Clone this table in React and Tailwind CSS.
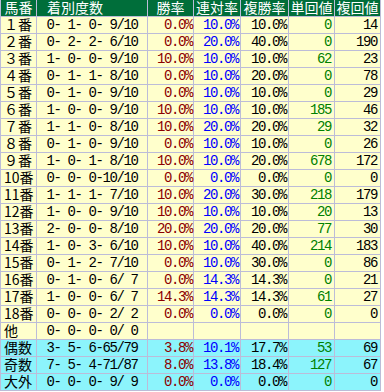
import React from "react";

const rows = [
  ["１番", "0- 1- 0- 9/10", "0.0%", "10.0%", "10.0%", "0", "14"],
  ["２番", "0- 2- 2- 6/10", "0.0%", "20.0%", "40.0%", "0", "190"],
  ["３番", "1- 0- 0- 9/10", "10.0%", "10.0%", "10.0%", "62", "23"],
  ["４番", "0- 1- 1- 8/10", "0.0%", "10.0%", "20.0%", "0", "78"],
  ["５番", "0- 1- 0- 9/10", "0.0%", "10.0%", "10.0%", "0", "29"],
  ["６番", "1- 0- 0- 9/10", "10.0%", "10.0%", "10.0%", "185", "46"],
  ["７番", "1- 1- 0- 8/10", "10.0%", "20.0%", "20.0%", "29", "32"],
  ["８番", "0- 1- 0- 9/10", "0.0%", "10.0%", "10.0%", "0", "26"],
  ["９番", "1- 0- 1- 8/10", "10.0%", "10.0%", "20.0%", "678", "172"],
  ["10番", "0- 0- 0-10/10", "0.0%", "0.0%", "0.0%", "0", "0"],
  ["11番", "1- 1- 1- 7/10", "10.0%", "20.0%", "30.0%", "218", "179"],
  ["12番", "1- 0- 0- 9/10", "10.0%", "10.0%", "10.0%", "20", "13"],
  ["13番", "2- 0- 0- 8/10", "20.0%", "20.0%", "20.0%", "77", "30"],
  ["14番", "1- 0- 3- 6/10", "10.0%", "10.0%", "40.0%", "214", "183"],
  ["15番", "0- 1- 2- 7/10", "0.0%", "10.0%", "30.0%", "0", "86"],
  ["16番", "0- 1- 0- 6/ 7", "0.0%", "14.3%", "14.3%", "0", "21"],
  ["17番", "1- 0- 0- 6/ 7", "14.3%", "14.3%", "14.3%", "61", "27"],
  ["18番", "0- 0- 0- 2/ 2", "0.0%", "0.0%", "0.0%", "0", "0"],
  ["他", "0- 0- 0- 0/ 0", "", "", "", "", ""],
];

const summary = [
  ["偶数", "3- 5- 6-65/79", "3.8%", "10.1%", "17.7%", "53", "69"],
  ["奇数", "7- 5- 4-71/87", "8.0%", "13.8%", "18.4%", "127", "67"],
  ["大外", "0- 0- 0- 9/ 9", "0.0%", "0.0%", "0.0%", "0", "0"],
];

const grid =
  "grid grid-cols-[37px_111px_46px_47px_48px_46px_46px] h-[17px]";
const cell = "border-r border-b border-[#bcbcd8] flex items-center";
const jp = { fontFamily: '"Noto Sans CJK JP", sans-serif' };
const mono = "font-['Liberation_Mono',monospace] text-[14px] tracking-[-1.4px] whitespace-pre leading-[14px]";

function Row({ r, bg }) {
  return (
    <div className={grid}>
      <div className={`${cell} ${bg} border-l pl-[3px] pb-[2px] text-[14px] leading-[14px] text-black whitespace-nowrap`} style={jp}>
        {r[0]}
      </div>
      <div className={`${cell} ${bg} justify-center ${mono} text-black`}>{r[1]}</div>
      <div className={`${cell} ${bg} justify-end pr-[1px] ${mono} text-[#8b0000]`}>{r[2]}</div>
      <div className={`${cell} ${bg} justify-end pr-[2px] ${mono} text-[#0000ff]`}>{r[3]}</div>
      <div className={`${cell} ${bg} justify-end pr-[2px] ${mono} text-black`}>{r[4]}</div>
      <div className={`${cell} ${bg} justify-end pr-[3px] ${mono} text-[#008000]`}>{r[5]}</div>
      <div className={`${cell} ${bg} justify-end pr-[3px] ${mono} text-black`}>{r[6]}</div>
    </div>
  );
}

export default function App() {
  const head = `${cell} bg-[#006e3a] text-white text-[14px] leading-[14px] pb-[2px] whitespace-nowrap`;
  return (
    <div className="w-[384px] h-[392px] bg-white">
      <div className={grid}>
        <div className={`${head} border-l justify-center`} style={jp}>馬番</div>
        <div className={`${head} pl-[10px]`} style={jp}>着別度数</div>
        <div className={`${head} justify-center`} style={jp}>勝率</div>
        <div className={`${head} justify-center`} style={jp}>連対率</div>
        <div className={`${head} justify-center`} style={jp}>複勝率</div>
        <div className={`${head} justify-center`} style={jp}>単回値</div>
        <div className={`${head} justify-center`} style={jp}>複回値</div>
      </div>
      {rows.map((r, i) => (
        <Row key={i} r={r} bg="bg-[#ffffcc]" />
      ))}
      {summary.map((r, i) => (
        <Row key={"s" + i} r={r} bg="bg-[#8cf4fc]" />
      ))}
    </div>
  );
}
